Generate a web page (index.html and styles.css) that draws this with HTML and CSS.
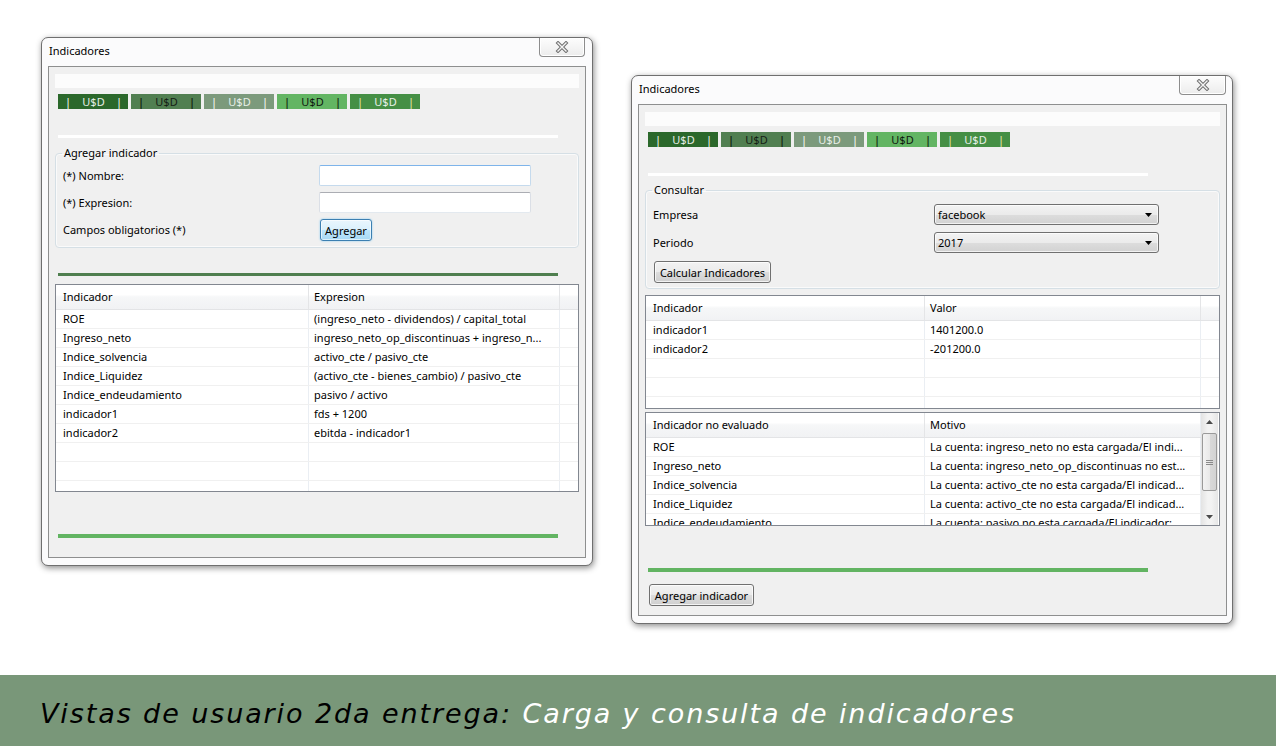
FILE: index.html
```html
<!DOCTYPE html>
<html lang="es">
<head>
<meta charset="utf-8">
<title>Indicadores</title>
<link rel="stylesheet" href="styles.css">
</head>
<body>
<main class="desktop">
  <section class="window win-left">
    <header class="titlebar">
      <span class="title">Indicadores</span>
      <span class="close"><svg width="14" height="12" viewBox="0 0 14 12"><path d="M3 2 L11 10 M11 2 L3 10" stroke="#6f6f6f" stroke-width="3.4" stroke-linecap="square"/><path d="M3 2 L11 10 M11 2 L3 10" stroke="#f4f4f4" stroke-width="1.4" stroke-linecap="square"/></svg></span>
    </header>
    <div class="client">
      <div class="strip"></div>
      <div class="bars">
        <div class="bar b1"><span class="pipe">|</span><span>U$D</span><span class="pipe">|</span></div>
        <div class="bar b2"><span class="pipe">|</span><span>U$D</span><span class="pipe">|</span></div>
        <div class="bar b3"><span class="pipe">|</span><span>U$D</span><span class="pipe">|</span></div>
        <div class="bar b4"><span class="pipe">|</span><span>U$D</span><span class="pipe">|</span></div>
        <div class="bar b5"><span class="pipe">|</span><span>U$D</span><span class="pipe">|</span></div>
      </div>
      <div class="line line-white"></div>
      <fieldset class="group group-add">
        <legend>Agregar indicador</legend>
        <div class="form form-add">
          <label class="lbl">(*) Nombre:</label>
          <span class="input input-focus"></span>
          <label class="lbl">(*) Expresion:</label>
          <span class="input"></span>
          <span class="lbl">Campos obligatorios (*)</span>
          <span class="btn btn-default btn-agregar">Agregar</span>
        </div>
      </fieldset>
      <div class="line line-dark"></div>
      <div class="table table-left">
        <div class="trow thead"><span class="cell">Indicador</span><span class="cell">Expresion</span><span class="cell"></span></div>
        <div class="trow"><span class="cell">ROE</span><span class="cell">(ingreso_neto - dividendos) / capital_total</span><span class="cell"></span></div>
        <div class="trow"><span class="cell">Ingreso_neto</span><span class="cell">ingreso_neto_op_discontinuas + ingreso_n...</span><span class="cell"></span></div>
        <div class="trow"><span class="cell">Indice_solvencia</span><span class="cell">activo_cte / pasivo_cte</span><span class="cell"></span></div>
        <div class="trow"><span class="cell">Indice_Liquidez</span><span class="cell">(activo_cte - bienes_cambio) / pasivo_cte</span><span class="cell"></span></div>
        <div class="trow"><span class="cell">Indice_endeudamiento</span><span class="cell">pasivo / activo</span><span class="cell"></span></div>
        <div class="trow"><span class="cell">indicador1</span><span class="cell">fds + 1200</span><span class="cell"></span></div>
        <div class="trow"><span class="cell">indicador2</span><span class="cell">ebitda - indicador1</span><span class="cell"></span></div>
        <div class="trow"><span class="cell"></span><span class="cell"></span><span class="cell"></span></div>
        <div class="trow"><span class="cell"></span><span class="cell"></span><span class="cell"></span></div>
        <div class="trow"><span class="cell"></span><span class="cell"></span><span class="cell"></span></div>
      </div>
      <div class="line line-light"></div>
    </div>
  </section>

  <section class="window win-right">
    <header class="titlebar">
      <span class="title">Indicadores</span>
      <span class="close close-r"><svg width="14" height="12" viewBox="0 0 14 12"><path d="M3 2 L11 10 M11 2 L3 10" stroke="#6f6f6f" stroke-width="3.4" stroke-linecap="square"/><path d="M3 2 L11 10 M11 2 L3 10" stroke="#f4f4f4" stroke-width="1.4" stroke-linecap="square"/></svg></span>
    </header>
    <div class="client">
      <div class="strip"></div>
      <div class="bars">
        <div class="bar b1"><span class="pipe">|</span><span>U$D</span><span class="pipe">|</span></div>
        <div class="bar b2"><span class="pipe">|</span><span>U$D</span><span class="pipe">|</span></div>
        <div class="bar b3"><span class="pipe">|</span><span>U$D</span><span class="pipe">|</span></div>
        <div class="bar b4"><span class="pipe">|</span><span>U$D</span><span class="pipe">|</span></div>
        <div class="bar b5"><span class="pipe">|</span><span>U$D</span><span class="pipe">|</span></div>
      </div>
      <div class="line line-white"></div>
      <fieldset class="group group-consult">
        <legend>Consultar</legend>
        <div class="form form-consult">
          <label class="lbl">Empresa</label>
          <span class="combo"><span>facebook</span><svg width="7" height="4" viewBox="0 0 7 4"><path d="M0 0 H7 L3.5 4 Z" fill="#000"/></svg></span>
          <label class="lbl">Periodo</label>
          <span class="combo"><span>2017</span><svg width="7" height="4" viewBox="0 0 7 4"><path d="M0 0 H7 L3.5 4 Z" fill="#000"/></svg></span>
          <span class="btn btn-calc">Calcular Indicadores</span>
        </div>
      </fieldset>
      <div class="table table-r table-values">
        <div class="trow thead"><span class="cell">Indicador</span><span class="cell">Valor</span><span class="cell"></span></div>
        <div class="trow"><span class="cell">indicador1</span><span class="cell">1401200.0</span><span class="cell"></span></div>
        <div class="trow"><span class="cell">indicador2</span><span class="cell">-201200.0</span><span class="cell"></span></div>
        <div class="trow"><span class="cell"></span><span class="cell"></span><span class="cell"></span></div>
        <div class="trow"><span class="cell"></span><span class="cell"></span><span class="cell"></span></div>
        <div class="trow"><span class="cell"></span><span class="cell"></span><span class="cell"></span></div>
      </div>
      <div class="table table-r table-missing">
        <div class="tlist">
          <div class="trow thead"><span class="cell">Indicador no evaluado</span><span class="cell">Motivo</span></div>
          <div class="trow"><span class="cell">ROE</span><span class="cell">La cuenta: ingreso_neto no esta cargada/El indi...</span></div>
          <div class="trow"><span class="cell">Ingreso_neto</span><span class="cell">La cuenta: ingreso_neto_op_discontinuas no est...</span></div>
          <div class="trow"><span class="cell">Indice_solvencia</span><span class="cell">La cuenta: activo_cte no esta cargada/El indicad...</span></div>
          <div class="trow"><span class="cell">Indice_Liquidez</span><span class="cell">La cuenta: activo_cte no esta cargada/El indicad...</span></div>
          <div class="trow"><span class="cell">Indice_endeudamiento</span><span class="cell">La cuenta: pasivo no esta cargada/El indicador:</span></div>
        </div>
        <div class="vscroll">
          <span class="sb-arrow"><svg width="7" height="4" viewBox="0 0 7 4"><path d="M0 4 H7 L3.5 0 Z" fill="#4a4a4a"/></svg></span>
          <span class="sb-track">
            <span class="sb-thumb"><svg width="7" height="5" viewBox="0 0 7 5"><path d="M0 0.5 H7 M0 2.5 H7 M0 4.5 H7" stroke="#8a8a8a" stroke-width="1"/></svg></span>
          </span>
          <span class="sb-arrow"><svg width="7" height="4" viewBox="0 0 7 4"><path d="M0 0 H7 L3.5 4 Z" fill="#4a4a4a"/></svg></span>
        </div>
      </div>
      <div class="line line-light"></div>
      <span class="btn btn-add-ind">Agregar indicador</span>
    </div>
  </section>
</main>
<footer class="banner">
  <p class="banner-text"><span class="dark">Vistas de usuario 2da entrega:</span><span class="light"> Carga y consulta de indicadores</span></p>
</footer>
</body>
</html>
```

FILE: styles.css
```css
* { box-sizing: border-box; }
html, body { margin: 0; padding: 0; }
body {
  width: 1276px;
  height: 746px;
  overflow: hidden;
  background: #ffffff;
  font-family: "Noto Sans", "Open Sans", sans-serif;
  font-size: 11px;
  color: #000;
}
.desktop { position: relative; height: 675px; }

.window {
  position: absolute;
  display: flex;
  flex-direction: column;
  background: #fbfbfc;
  border: 1px solid #6f6f6f;
  border-radius: 7px;
  padding: 0 6px 7px 6px;
  box-shadow: 1px 2px 6px rgba(0, 0, 0, 0.45);
}
.win-left { left: 41px; top: 37px; width: 552px; height: 529px; }
.win-right { left: 631px; top: 75px; width: 602px; height: 549px; padding-right: 5px; }

.titlebar {
  flex: none;
  height: 28px;
  display: flex;
  justify-content: space-between;
  align-items: flex-start;
}
.title { margin: 5px 0 0 1px; line-height: 16px; }
.close {
  width: 46px;
  height: 19px;
  margin-right: 1px;
  border: 1px solid #8d8d8d;
  border-top: none;
  border-radius: 0 0 4px 4px;
  background: linear-gradient(#fdfdfd, #ececec);
  box-shadow: inset 0 0 0 1px #ffffff;
  display: flex;
  align-items: center;
  justify-content: center;
}
.close-r { width: 47px; }

.client {
  flex: 1;
  display: flex;
  flex-direction: column;
  background: #f0f0f0;
  border: 1px solid #8e8f8f;
  padding: 7px 6px 0 6px;
}
.strip { flex: none; height: 14px; background: #fcfcfc; }

.bars { flex: none; display: flex; gap: 3px; margin: 6px 0 0 3px; }
.bar {
  width: 70px;
  height: 15px;
  display: flex;
  justify-content: space-between;
  align-items: center;
  padding: 0 6px 0 7px;
  line-height: 15px;
  font-size: 11px;
}
.b1 { background: #2b682b; color: #e6ede6; }
.b1 .pipe { color: #ffffff; }
.b2 { background: #517f51; color: #152015; }
.b2 .pipe { color: #000000; }
.b3 { background: #7c9a7c; color: #e8efe8; }
.b3 .pipe { color: #ffffff; }
.b4 { background: #63b563; color: #101810; }
.b4 .pipe { color: #000000; }
.b5 { background: #458f45; color: #e8f0e8; }
.b5 .pipe { color: #f2e6a8; }

.line { flex: none; width: 500px; margin-left: 3px; }
.line-white { height: 3px; background: #ffffff; margin-top: 26px; }
.line-dark { height: 3px; background: #4f7f4f; margin-top: 25px; }
.line-light { height: 4px; background: #62b462; margin-top: 42px; }

.group {
  flex: none;
  margin: 0;
  min-width: 0;
  border: 1px solid #d5dfe5;
  border-radius: 4px;
  box-shadow: inset 0 0 0 1px #fafafa;
  padding: 4px 7px 6px 7px;
}
.group legend { padding: 0 2px; margin-left: -1px; line-height: 16px; }
.group-add { margin-top: 7px; }
.group-consult { margin-top: 6px; padding-top: 6px; padding-left: 7px; }

.form { display: grid; align-items: center; }
.form-add { grid-template-columns: 256px 212px; grid-template-rows: 21px 21px 22px; row-gap: 6px; }
.form-consult { grid-template-columns: 281px 225px; grid-template-rows: 21px 21px 22px; row-gap: 7px; }
.form-consult .btn-calc { grid-column: 1 / span 2; margin-top: 1px; }
.lbl { line-height: 16px; }

.input {
  display: block;
  height: 21px;
  background: #ffffff;
  border: 1px solid #e3e9ef;
  border-top-color: #abadb3;
  border-left-color: #dbdfe6;
  border-right-color: #dbdfe6;
  border-radius: 2px;
}
.input-focus { border-color: #c5daed; border-top-color: #7eb4ea; }

.btn {
  display: inline-flex;
  align-items: center;
  justify-content: center;
  height: 22px;
  padding: 0 4px;
  border: 1px solid #707070;
  border-radius: 3px;
  background: linear-gradient(#f2f2f2 0%, #ebebeb 50%, #dddddd 51%, #cfcfcf 100%);
  box-shadow: inset 0 0 0 1px rgba(255, 255, 255, 0.75);
  white-space: nowrap;
  justify-self: start;
  align-self: start;
}
.btn-agregar { width: 52px; margin-left: 1px; }
.btn-default {
  border-color: #3c7fb1;
  background: linear-gradient(#eaf6fd 0%, #d9f0fc 50%, #bee6fd 51%, #a7d9f5 100%);
  box-shadow: inset 0 0 0 1px rgba(255, 255, 255, 0.6), 0 0 2px #7ac4ef;
}
.btn-calc { width: 117px; margin-left: 1px; }
.btn-add-ind { width: 105px; margin: 12px 0 0 4px; flex: none; }

.combo {
  display: flex;
  align-items: center;
  justify-content: space-between;
  height: 21px;
  padding: 0 6px 0 3px;
  border: 1px solid #707070;
  border-radius: 3px;
  background: linear-gradient(#f3f3f3 0%, #ebebeb 50%, #dddddd 51%, #d2d2d2 100%);
  box-shadow: inset 0 0 0 1px rgba(255, 255, 255, 0.7);
}

.table {
  flex: none;
  background: #ffffff;
  border: 1px solid #828790;
  overflow: hidden;
}
.table-left { margin-top: 8px; height: 208px; }
.table-values { margin-top: 6px; height: 114px; }
.table-missing { margin-top: 3px; height: 114px; display: flex; }

.trow {
  display: grid;
  height: 19px;
  line-height: 18px;
  border-bottom: 1px solid #f0f0f0;
}
.thead {
  height: 25px;
  line-height: 24px;
  border-bottom: 1px solid #e3e4e6;
  background: linear-gradient(#ffffff 0%, #ffffff 40%, #f6f7f8 50%, #f1f2f4 100%);
}
.cell {
  padding-left: 6px;
  border-right: 1px solid #eaeef3;
  white-space: nowrap;
  overflow: hidden;
}
.thead .cell { border-right-color: #e4e5e7; }
.table-left .trow { grid-template-columns: 253px 251px 1fr; }
.table-left .cell:first-child { padding-left: 7px; }
.table-left .cell:nth-child(2) { padding-left: 5px; }
.table-r .trow { grid-template-columns: 279px 276px 1fr; }
.table-r .cell:first-child { padding-left: 7px; }
.table-r .cell:nth-child(2) { padding-left: 5px; }
.cell:last-child { border-right: none; }
.table-missing .cell:last-child { border-right: 1px solid #eaeef3; }

.tlist { width: 555px; flex: none; overflow: hidden; }
.vscroll {
  width: 17px;
  flex: none;
  display: flex;
  flex-direction: column;
  background: linear-gradient(90deg, #e3e3e3, #f3f3f3 40%, #f3f3f3 60%, #e6e6e6);
}
.sb-arrow {
  flex: none;
  height: 17px;
  display: flex;
  align-items: center;
  justify-content: center;
}
.sb-track { flex: 1; padding-top: 3px; }
.sb-thumb {
  display: flex;
  align-items: center;
  justify-content: center;
  height: 58px;
  margin: 0 1px;
  border: 1px solid #9a9a9a;
  border-radius: 2px;
  background: linear-gradient(90deg, #f3f3f3, #e9e9e9 50%, #d9d9d9 51%, #d3d3d3);
}

.banner {
  height: 71px;
  background: #799779;
  padding: 0 0 0 40px;
  display: flex;
  align-items: center;
}
.banner-text {
  margin: 5px 0 0 0;
  font-family: "DejaVu Sans", "Liberation Sans", sans-serif;
  font-style: italic;
  font-size: 27px;
  letter-spacing: 1.9px;
  white-space: nowrap;
}
.banner-text .dark { color: #000000; }
.banner-text .light { color: #ffffff; }
```
